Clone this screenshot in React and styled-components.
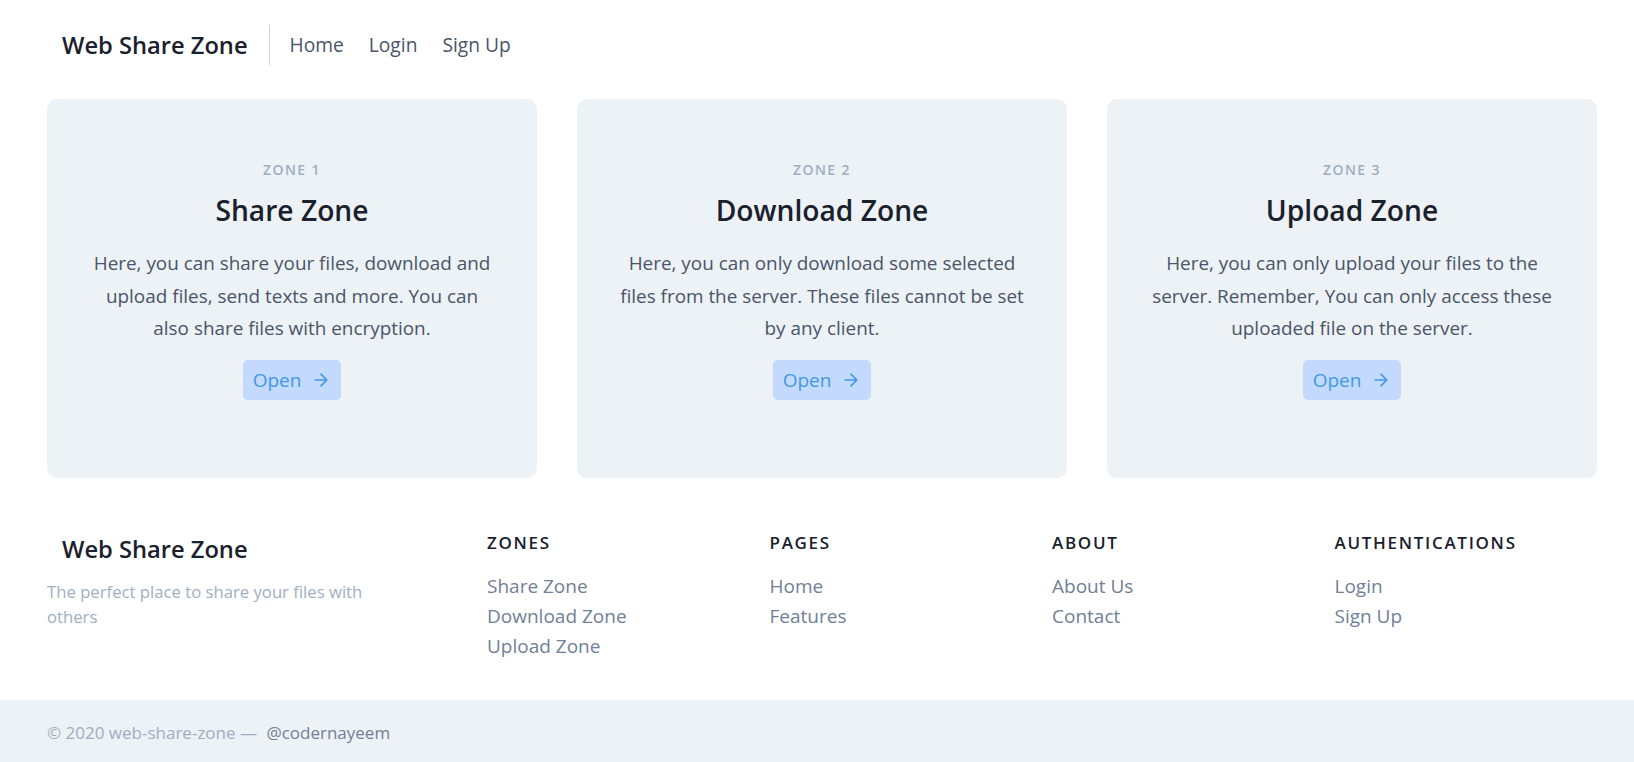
import styled, { createGlobalStyle } from 'styled-components'

const GlobalStyle = createGlobalStyle`
  * {
    box-sizing: border-box;
  }
  body {
    margin: 0;
    background: #fff;
    font-family: "Open Sans", "Noto Sans", sans-serif;
    color: #4a5568;
  }
  a {
    text-decoration: none;
  }
`

const zones = [
  {
    label: 'ZONE 1',
    title: 'Share Zone',
    text: 'Here, you can share your files, download and upload files, send texts and more. You can also share files with encryption.',
  },
  {
    label: 'ZONE 2',
    title: 'Download Zone',
    text: 'Here, you can only download some selected files from the server. These files cannot be set by any client.',
  },
  {
    label: 'ZONE 3',
    title: 'Upload Zone',
    text: 'Here, you can only upload your files to the server. Remember, You can only access these uploaded file on the server.',
  },
]

const footerLinks = [
  { title: 'Zones', links: ['Share Zone', 'Download Zone', 'Upload Zone'] },
  { title: 'Pages', links: ['Home', 'Features'] },
  { title: 'About', links: ['About Us', 'Contact'] },
  { title: 'Authentications', links: ['Login', 'Sign Up'] },
]

const ArrowIcon = () => (
  <svg
    width="20"
    height="20"
    viewBox="0 0 24 24"
    fill="none"
    stroke="currentColor"
    strokeWidth="2"
    strokeLinecap="round"
    strokeLinejoin="round">
    <path d="M5 12h14M12 5l7 7-7 7" />
  </svg>
)

const App = () => {
  return (
    <>
      <GlobalStyle />
      <Header>
        <Brand href="#">Web Share Zone</Brand>
        <Nav>
          <NavLink href="#">Home</NavLink>
          <NavLink href="#">Login</NavLink>
          <NavLink href="#">Sign Up</NavLink>
        </Nav>
      </Header>

      <Zones>
        {zones.map(zone => (
          <Card key={zone.label}>
            <CardLabel>{zone.label}</CardLabel>
            <CardTitle>{zone.title}</CardTitle>
            <CardText>{zone.text}</CardText>
            <OpenButton href="#">
              Open
              <ArrowIcon />
            </OpenButton>
          </Card>
        ))}
      </Zones>

      <Footer>
        <FooterMain>
          <FooterAbout>
            <Brand href="#">Web Share Zone</Brand>
            <Tagline>The perfect place to share your files with others</Tagline>
          </FooterAbout>
          <FooterColumns>
            {footerLinks.map(col => (
              <FooterColumn key={col.title}>
                <ColumnTitle>{col.title}</ColumnTitle>
                {col.links.map(link => (
                  <FooterLink key={link} href="#">
                    {link}
                  </FooterLink>
                ))}
              </FooterColumn>
            ))}
          </FooterColumns>
        </FooterMain>
        <BottomBar>
          <Copyright>
            © 2020 web-share-zone — <Handle href="#">@codernayeem</Handle>
          </Copyright>
        </BottomBar>
      </Footer>
    </>
  )
}

export default App

const Header = styled.header`
  display: flex;
  align-items: center;
  padding: 25px 37px 25px 47px;
`

const Brand = styled.a`
  display: block;
  margin-left: 15px;
  font-size: 23.7px;
  line-height: 40px;
  font-weight: 600;
  color: #1a202c;
`

const Nav = styled.nav`
  display: flex;
  align-items: center;
  gap: 25px;
  margin-left: 21px;
  padding: 5px 0 5px 20px;
  border-left: 1px solid #cbd5e0;
`

const NavLink = styled.a`
  font-size: 19.2px;
  line-height: 30px;
  color: #4a5568;
`

const Zones = styled.section`
  display: grid;
  grid-template-columns: repeat(3, 1fr);
  gap: 40px;
  padding: 9px 37px 0 47px;
`

const Card = styled.article`
  background: #edf2f7;
  border-radius: 10px;
  padding: 61px 40px 78px;
  text-align: center;
`

const CardLabel = styled.h2`
  margin: 0 0 10px;
  font-size: 14px;
  line-height: 20px;
  font-weight: 600;
  letter-spacing: 0.1em;
  color: #a0aec0;
`

const CardTitle = styled.h1`
  margin: 0 0 17px;
  font-size: 28.2px;
  line-height: 40px;
  font-weight: 600;
  color: #1a202c;
`

const CardText = styled.p`
  margin: 0 0 15px;
  font-size: 18.9px;
  line-height: 32.5px;
  color: #4a5568;
`

const OpenButton = styled.a`
  display: inline-flex;
  align-items: center;
  gap: 10px;
  padding: 5px 10px;
  border-radius: 5px;
  background: #c3dafe;
  color: #4299e1;
  font-size: 19px;
  line-height: 30px;
`

const Footer = styled.footer``

const FooterMain = styled.div`
  display: flex;
  align-items: flex-start;
  padding: 51px 37px 39px 47px;
`

const FooterAbout = styled.div`
  width: 320px;
  flex-shrink: 0;
`

const Tagline = styled.p`
  margin: 10px 0 0;
  font-size: 16.7px;
  line-height: 25px;
  color: #a0aec0;
`

const FooterColumns = styled.div`
  flex-grow: 1;
  display: grid;
  grid-template-columns: repeat(4, 1fr);
  padding-left: 100px;
`

const FooterColumn = styled.nav`
  display: flex;
  flex-direction: column;
  align-items: flex-start;
  padding: 1px 20px 0;
`

const ColumnTitle = styled.h2`
  margin: 0 0 16px;
  font-size: 17px;
  line-height: 25px;
  font-weight: 600;
  letter-spacing: 0.1em;
  text-transform: uppercase;
  color: #1a202c;
`

const FooterLink = styled.a`
  font-size: 19px;
  line-height: 30px;
  color: #718096;
`

const BottomBar = styled.div`
  background: #edf2f7;
  padding: 20px 37px 20px 47px;
`

const Copyright = styled.p`
  margin: 0;
  font-size: 17px;
  line-height: 25px;
  color: #a0aec0;
`

const Handle = styled.a`
  margin-left: 5px;
  color: #718096;
`
